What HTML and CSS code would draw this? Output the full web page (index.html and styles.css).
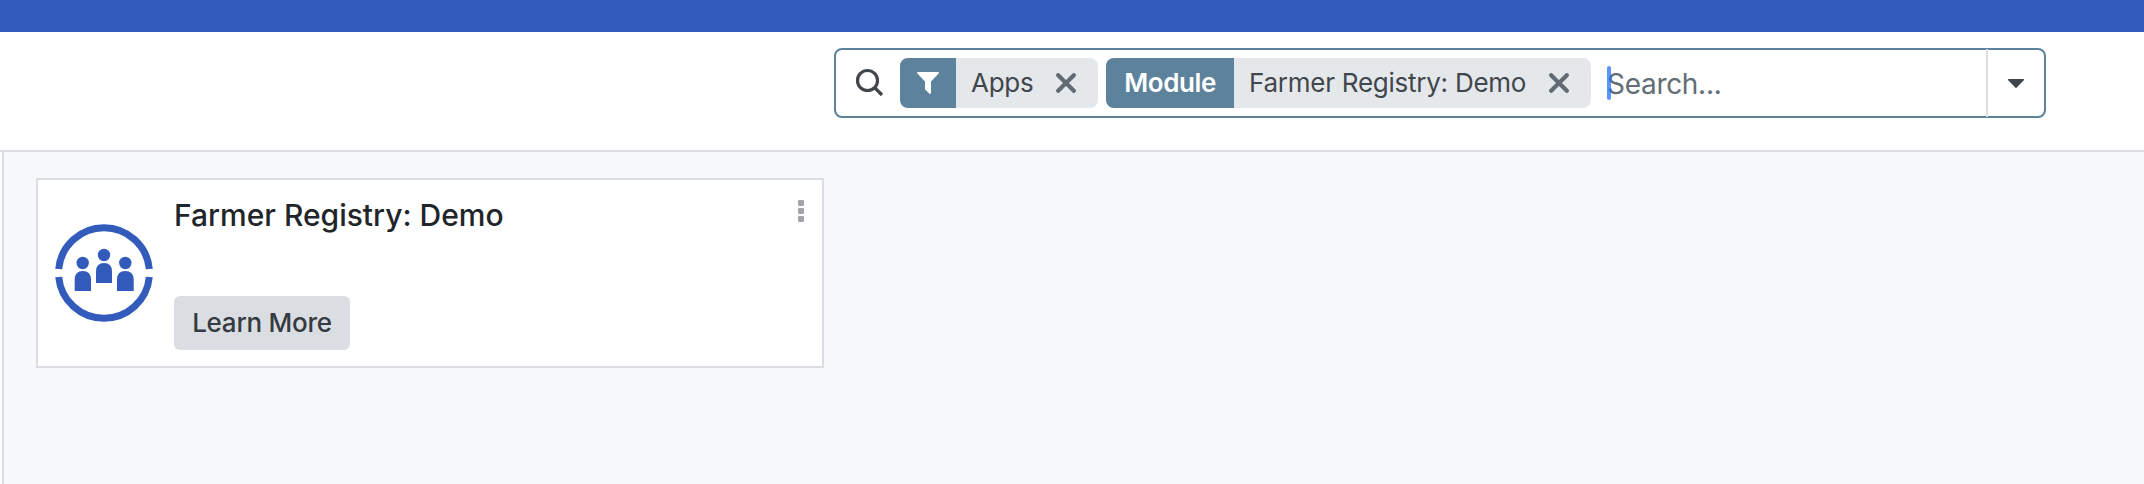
FILE: index.html
```html
<!DOCTYPE html>
<html lang="en">
<head>
<meta charset="utf-8">
<title>Apps</title>
<link rel="stylesheet" href="styles.css">
</head>
<body>
<div class="navbar"></div>
<header class="control-panel">
  <div class="search">
    <svg class="search-icon" width="32" height="32" viewBox="0 0 32 32"><circle cx="13.5" cy="13.5" r="10" /><path d="M20.5 20.5 28 28" /></svg>
    <div class="facet">
      <span class="facet-label facet-filter"><svg width="22" height="22" viewBox="0 0 22 22"><path d="M0.8 0H21.2Q22.4 .4 21.7 1.6L14 9.5V21Q13.6 22.2 12.5 21.7L8.4 17.8Q8 17.4 8 17V9.5L.3 1.6Q-.4 .4 .8 0Z" /></svg></span>
      <span class="facet-value apps">Apps</span>
      <svg class="remove" width="20" height="20" viewBox="0 0 20 20"><path d="M2.2 2.2 17.8 17.8M17.8 2.2 2.2 17.8" /></svg>
    </div>
    <div class="facet">
      <span class="facet-label facet-module">Module</span>
      <span class="facet-value module-value">Farmer Registry: Demo</span>
      <svg class="remove" width="20" height="20" viewBox="0 0 20 20"><path d="M2.2 2.2 17.8 17.8M17.8 2.2 2.2 17.8" /></svg>
    </div>
    <div class="search-input"><span class="placeholder">Search...</span><span class="cursor"></span></div>
    <div class="toggle"><svg width="16" height="9" viewBox="0 0 16 9"><path d="M.6 0H15.4Q16.4 .5 15.8 1.3L8.8 8.6Q8 9.3 7.2 8.6L.2 1.3Q-.4 .5 .6 0Z" /></svg></div>
  </div>
</header>
<main class="content">
  <article class="card">
    <svg class="logo" width="98" height="98" viewBox="0 0 98 98">
      <path class="ring" d="M3.7 45A45.5 45.5 0 0 1 94.3 45M3.7 53A45.5 45.5 0 0 0 94.3 53" />
      <circle cx="49" cy="31" r="6.2" /><circle cx="27.7" cy="39" r="6.2" /><circle cx="70.3" cy="39" r="6.2" />
      <path d="M41 59V47.5Q41 39 49 39T57 47.5V59ZM19.7 67V55.5Q19.7 47 27.8 47T36 55.5V67ZM62 67V55.5Q62 47 70.3 47T78.7 55.5V67Z" />
    </svg>
    <div class="details">
      <h2 class="title"><span>Farmer Registry: Demo</span></h2>
      <button class="learn"><span>Learn More</span></button>
    </div>
    <svg class="menu" width="6" height="22" viewBox="0 0 6 22"><rect width="6" height="6" rx="1" /><rect y="8" width="6" height="6" rx="1" /><rect y="16" width="6" height="6" rx="1" /></svg>
  </article>
</main>
</body>
</html>
```
FILE: styles.css
```css
* { box-sizing: border-box; }
body { margin: 0; height: 484px; display: flex; flex-direction: column; overflow: hidden; background: #fff; font-family: Inter, "Liberation Sans", sans-serif; font-size: 26px; color: #41464c; white-space: nowrap; }
svg { display: block; flex: none; }
.navbar { height: 32px; flex: none; background: #325bbb; }
.control-panel { height: 120px; flex: none; padding: 16px 98px 0 834px; border-bottom: 2px solid #dadde2; }
.search { display: flex; align-items: center; height: 70px; border: 2px solid #5d829c; border-radius: 8px; }
.search-icon { margin: 0 14px 0 18px; fill: none; stroke: #41464c; stroke-width: 3.2; }
.facet { display: flex; align-items: center; height: 50px; margin-right: 8px; padding-right: 22px; border-radius: 8px; background: #e5e8eb; overflow: hidden; }
.facet-label { display: flex; align-items: center; justify-content: center; height: 50px; background: #5d829c; color: #fff; font-weight: 600; letter-spacing: -.4px; }
.facet-filter { width: 56px; }
.facet-filter svg { fill: #fff; }
.facet-module { width: 128px; padding-bottom: 2px; }
.facet-value { margin-left: 15px; padding-bottom: 2px; letter-spacing: -.25px; }
.apps { width: 85px; }
.module-value { width: 300px; }
.remove { fill: none; stroke: #636b72; stroke-width: 4.2; stroke-linecap: round; }
.search-input { display: flex; align-items: center; position: relative; flex: 1; height: 50px; padding: 2px 0 0 8px; font-size: 28px; letter-spacing: -.3px; color: #636d75; }
.cursor { position: absolute; left: 8px; top: 8px; width: 4px; height: 34px; border-radius: 2px; background: #1a6dffb8; }
.toggle { display: flex; align-items: center; justify-content: center; width: 58px; height: 68px; border-left: 2px solid #dadde2; fill: #41464c; }
.content { flex: 1; margin-left: 2px; padding: 26px 32px; border-left: 2px solid #dadde2; background: #f7f8fa; }
.card { display: flex; align-items: flex-start; width: 788px; height: 190px; padding: 16px 18px 16px 17px; border: 2px solid #dadde2; background: #fff; }
.logo { margin: 28px 21px 0 0; fill: #325bbb; }
.ring { fill: none; stroke: #325bbb; stroke-width: 7; }
.details { display: flex; flex-direction: column; justify-content: space-between; align-items: flex-start; flex: 1; height: 154px; }
.title { margin: 0; font-size: 30px; font-weight: 500; line-height: 38px; color: #212529; }
.learn { width: 176px; height: 54px; padding: 0 0 1px; border: 0; border-radius: 6px; background: #dadde2; color: #343a40; font: inherit; font-weight: 500; letter-spacing: -.25px; }
.menu { margin-top: 4px; fill: #a3a5a9; }
```
